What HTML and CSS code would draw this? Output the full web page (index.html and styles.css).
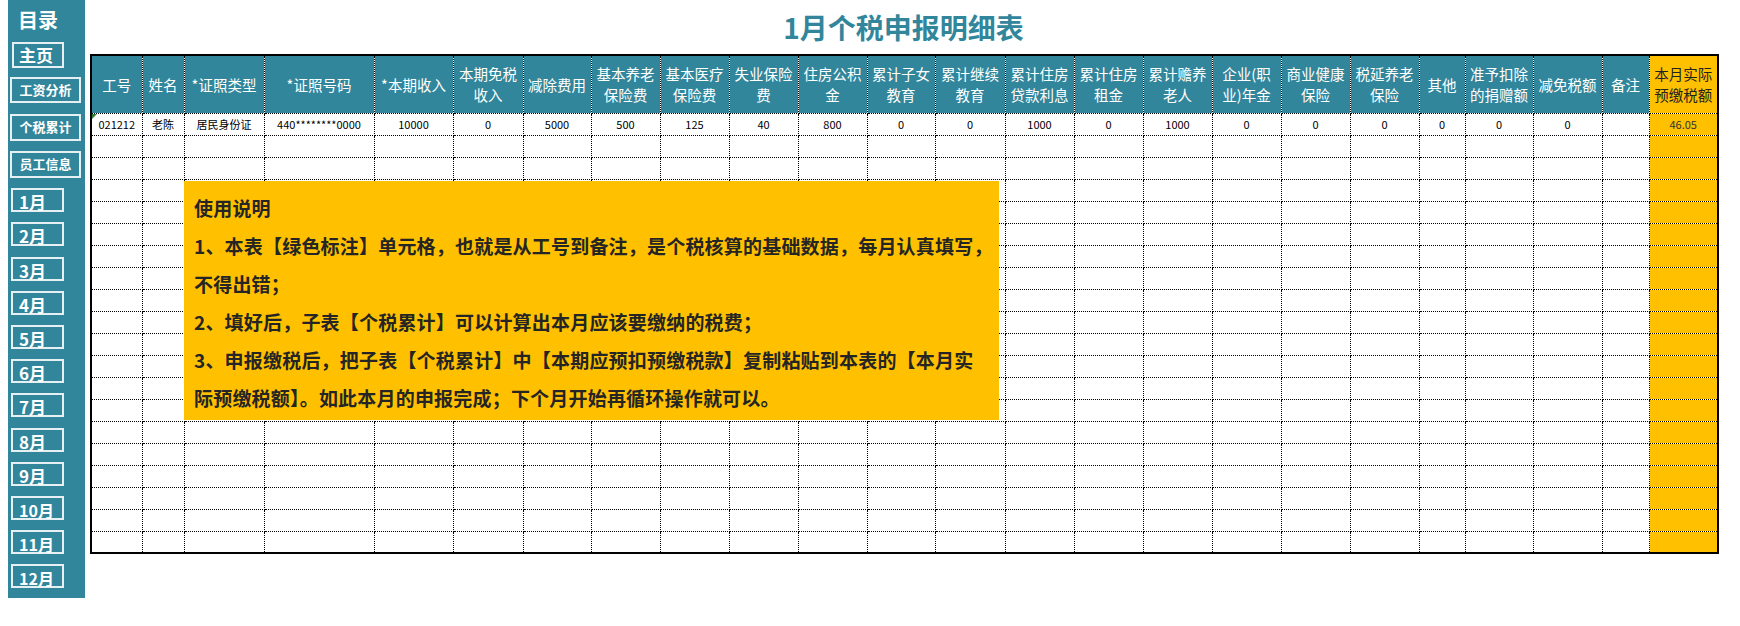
FILE: index.html
```html
<!DOCTYPE html>
<html lang="zh-CN">
<head>
<meta charset="utf-8">
<title>1月个税申报明细表</title>
<link rel="stylesheet" href="styles.css">
</head>
<body>
<div class="page">
  <nav class="sidebar">
    <div class="side-title">目录</div>
    <div class="btn btn-home">主页</div>
    <div class="btn btn-wide btn-first">工资分析</div>
    <div class="btn btn-wide btn-mid">个税累计</div>
    <div class="btn btn-wide btn-mid2">员工信息</div>
    <div class="btn btn-month">1月</div>
    <div class="btn btn-month">2月</div>
    <div class="btn btn-month">3月</div>
    <div class="btn btn-month">4月</div>
    <div class="btn btn-month">5月</div>
    <div class="btn btn-month">6月</div>
    <div class="btn btn-month">7月</div>
    <div class="btn btn-month">8月</div>
    <div class="btn btn-month">9月</div>
    <div class="btn btn-month btn-dd">10月</div>
    <div class="btn btn-month btn-dd">11月</div>
    <div class="btn btn-month btn-dd">12月</div>
  </nav>
  <main class="main">
    <h1 class="title">1月个税申报明细表</h1>
    <table class="sheet">
      <colgroup>
        <col><col><col><col><col><col><col><col><col><col><col><col>
        <col><col><col><col><col><col><col><col><col><col><col><col>
      </colgroup>
      <thead>
        <tr class="head">
          <th>工号</th><th>姓名</th><th>*证照类型</th><th>*证照号码</th><th>*本期收入</th>
          <th>本期免税<br>收入</th><th>减除费用</th><th>基本养老<br>保险费</th><th>基本医疗<br>保险费</th>
          <th>失业保险<br>费</th><th>住房公积<br>金</th><th>累计子女<br>教育</th><th>累计继续<br>教育</th>
          <th>累计住房<br>贷款利息</th><th>累计住房<br>租金</th><th>累计赡养<br>老人</th><th>企业(职<br>业)年金</th>
          <th>商业健康<br>保险</th><th>税延养老<br>保险</th><th>其他</th><th>准予扣除<br>的捐赠额</th>
          <th>减免税额</th><th>备注</th><th class="o">本月实际<br>预缴税额</th>
        </tr>
      </thead>
      <tbody>
        <tr class="r"><td class="flag">021212</td><td>老陈</td><td>居民身份证</td><td>440********0000</td><td>10000</td><td>0</td><td>5000</td><td>500</td><td>125</td><td>40</td><td>800</td><td>0</td><td>0</td><td>1000</td><td>0</td><td>1000</td><td>0</td><td>0</td><td>0</td><td>0</td><td>0</td><td>0</td><td></td><td class="o">46.05</td></tr>
        <tr class="r"><td></td><td></td><td></td><td></td><td></td><td></td><td></td><td></td><td></td><td></td><td></td><td></td><td></td><td></td><td></td><td></td><td></td><td></td><td></td><td></td><td></td><td></td><td></td><td class="o"></td></tr>
        <tr class="r"><td></td><td></td><td></td><td></td><td></td><td></td><td></td><td></td><td></td><td></td><td></td><td></td><td></td><td></td><td></td><td></td><td></td><td></td><td></td><td></td><td></td><td></td><td></td><td class="o"></td></tr>
        <tr class="r"><td></td><td></td><td></td><td></td><td></td><td></td><td></td><td></td><td></td><td></td><td></td><td></td><td></td><td></td><td></td><td></td><td></td><td></td><td></td><td></td><td></td><td></td><td></td><td class="o"></td></tr>
        <tr class="r"><td></td><td></td><td></td><td></td><td></td><td></td><td></td><td></td><td></td><td></td><td></td><td></td><td></td><td></td><td></td><td></td><td></td><td></td><td></td><td></td><td></td><td></td><td></td><td class="o"></td></tr>
        <tr class="r"><td></td><td></td><td></td><td></td><td></td><td></td><td></td><td></td><td></td><td></td><td></td><td></td><td></td><td></td><td></td><td></td><td></td><td></td><td></td><td></td><td></td><td></td><td></td><td class="o"></td></tr>
        <tr class="r"><td></td><td></td><td></td><td></td><td></td><td></td><td></td><td></td><td></td><td></td><td></td><td></td><td></td><td></td><td></td><td></td><td></td><td></td><td></td><td></td><td></td><td></td><td></td><td class="o"></td></tr>
        <tr class="r"><td></td><td></td><td></td><td></td><td></td><td></td><td></td><td></td><td></td><td></td><td></td><td></td><td></td><td></td><td></td><td></td><td></td><td></td><td></td><td></td><td></td><td></td><td></td><td class="o"></td></tr>
        <tr class="r"><td></td><td></td><td></td><td></td><td></td><td></td><td></td><td></td><td></td><td></td><td></td><td></td><td></td><td></td><td></td><td></td><td></td><td></td><td></td><td></td><td></td><td></td><td></td><td class="o"></td></tr>
        <tr class="r"><td></td><td></td><td></td><td></td><td></td><td></td><td></td><td></td><td></td><td></td><td></td><td></td><td></td><td></td><td></td><td></td><td></td><td></td><td></td><td></td><td></td><td></td><td></td><td class="o"></td></tr>
        <tr class="r"><td></td><td></td><td></td><td></td><td></td><td></td><td></td><td></td><td></td><td></td><td></td><td></td><td></td><td></td><td></td><td></td><td></td><td></td><td></td><td></td><td></td><td></td><td></td><td class="o"></td></tr>
        <tr class="r"><td></td><td></td><td></td><td></td><td></td><td></td><td></td><td></td><td></td><td></td><td></td><td></td><td></td><td></td><td></td><td></td><td></td><td></td><td></td><td></td><td></td><td></td><td></td><td class="o"></td></tr>
        <tr class="r"><td></td><td></td><td></td><td></td><td></td><td></td><td></td><td></td><td></td><td></td><td></td><td></td><td></td><td></td><td></td><td></td><td></td><td></td><td></td><td></td><td></td><td></td><td></td><td class="o"></td></tr>
        <tr class="r"><td></td><td></td><td></td><td></td><td></td><td></td><td></td><td></td><td></td><td></td><td></td><td></td><td></td><td></td><td></td><td></td><td></td><td></td><td></td><td></td><td></td><td></td><td></td><td class="o"></td></tr>
        <tr class="r"><td></td><td></td><td></td><td></td><td></td><td></td><td></td><td></td><td></td><td></td><td></td><td></td><td></td><td></td><td></td><td></td><td></td><td></td><td></td><td></td><td></td><td></td><td></td><td class="o"></td></tr>
        <tr class="r"><td></td><td></td><td></td><td></td><td></td><td></td><td></td><td></td><td></td><td></td><td></td><td></td><td></td><td></td><td></td><td></td><td></td><td></td><td></td><td></td><td></td><td></td><td></td><td class="o"></td></tr>
        <tr class="r"><td></td><td></td><td></td><td></td><td></td><td></td><td></td><td></td><td></td><td></td><td></td><td></td><td></td><td></td><td></td><td></td><td></td><td></td><td></td><td></td><td></td><td></td><td></td><td class="o"></td></tr>
        <tr class="r"><td></td><td></td><td></td><td></td><td></td><td></td><td></td><td></td><td></td><td></td><td></td><td></td><td></td><td></td><td></td><td></td><td></td><td></td><td></td><td></td><td></td><td></td><td></td><td class="o"></td></tr>
        <tr class="r"><td></td><td></td><td></td><td></td><td></td><td></td><td></td><td></td><td></td><td></td><td></td><td></td><td></td><td></td><td></td><td></td><td></td><td></td><td></td><td></td><td></td><td></td><td></td><td class="o"></td></tr>
        <tr class="r"><td></td><td></td><td></td><td></td><td></td><td></td><td></td><td></td><td></td><td></td><td></td><td></td><td></td><td></td><td></td><td></td><td></td><td></td><td></td><td></td><td></td><td></td><td></td><td class="o"></td></tr>
      </tbody>
    </table>
    <div class="note">
      <div class="note-line note-head">使用说明</div>
      <div class="note-line">1、本表【绿色标注】单元格，也就是从工号到备注，是个税核算的基础数据，每月认真填写，</div>
      <div class="note-line">不得出错；</div>
      <div class="note-line">2、填好后，子表【个税累计】可以计算出本月应该要缴纳的税费；</div>
      <div class="note-line">3、申报缴税后，把子表【个税累计】中【本期应预扣预缴税款】复制粘贴到本表的【本月实</div>
      <div class="note-line">际预缴税额】。如此本月的申报完成；下个月开始再循环操作就可以。</div>
    </div>
  </main>
</div>
</body>
</html>
```

FILE: styles.css
```css
* { box-sizing: border-box; }

html, body {
  margin: 0;
  padding: 0;
  background: #ffffff;
}

body {
  font-family: "Noto Sans CJK SC", "Noto Sans", sans-serif;
  color: #000;
}

.page {
  display: flex;
  align-items: flex-start;
  padding-left: 8px;
}

/* ---------- sidebar ---------- */
.sidebar {
  width: 77px;
  height: 598px;
  background: #31869b;
  display: flex;
  flex-direction: column;
  align-items: flex-start;
  flex-shrink: 0;
}

.side-title {
  margin-top: 6px;
  padding-left: 10px;
  height: 28px;
  line-height: 28px;
  font-size: 20px;
  font-weight: 700;
  color: #ffffff;
}

.btn {
  border: 2px solid #e6f0f3;
  color: #ffffff;
  font-weight: 700;
  white-space: nowrap;
}

.btn-home {
  margin-top: 8px;
  margin-left: 4px;
  width: 52px;
  height: 26px;
  line-height: 21px;
  font-size: 17px;
  padding-left: 5px;
}

.btn-wide {
  margin-left: 2px;
  width: 71px;
  height: 26px;
  line-height: 21px;
  font-size: 13px;
  text-align: center;
}

.btn-first { margin-top: 9px; }
.btn-mid { margin-top: 11px; height: 27px; line-height: 22px; }
.btn-mid2 { margin-top: 10px; height: 27px; line-height: 22px; }

.btn-month {
  margin-left: 3px;
  margin-top: 10.2px;
  width: 53px;
  height: 24px;
  line-height: 22px;
  padding-top: 1px;
  padding-left: 6px;
  font-size: 17px;
}

.btn-dd { font-size: 16px; }

/* ---------- main ---------- */
.main {
  position: relative;
  margin-left: 5px;
  width: 1627px;
}

.title {
  margin: 0;
  height: 54px;
  line-height: 54px;
  text-align: center;
  font-size: 28px;
  font-weight: 700;
  color: #31869b;
}

.sheet {
  width: 1627px;
  table-layout: fixed;
  border-collapse: collapse;
  border: 2px solid #000;
}

.sheet col:nth-child(1) { width: 51px; }
.sheet col:nth-child(2) { width: 42px; }
.sheet col:nth-child(3) { width: 80px; }
.sheet col:nth-child(4) { width: 110px; }
.sheet col:nth-child(5) { width: 79px; }
.sheet col:nth-child(6) { width: 70px; }
.sheet col:nth-child(7) { width: 68px; }
.sheet col:nth-child(8) { width: 69px; }
.sheet col:nth-child(9) { width: 69px; }
.sheet col:nth-child(10) { width: 69px; }
.sheet col:nth-child(11) { width: 69px; }
.sheet col:nth-child(12) { width: 68px; }
.sheet col:nth-child(13) { width: 70px; }
.sheet col:nth-child(14) { width: 69px; }
.sheet col:nth-child(15) { width: 69px; }
.sheet col:nth-child(16) { width: 69px; }
.sheet col:nth-child(17) { width: 69px; }
.sheet col:nth-child(18) { width: 69px; }
.sheet col:nth-child(19) { width: 69px; }
.sheet col:nth-child(20) { width: 46px; }
.sheet col:nth-child(21) { width: 68px; }
.sheet col:nth-child(22) { width: 69px; }
.sheet col:nth-child(23) { width: 47px; }
.sheet col:nth-child(24) { width: 69px; }

.sheet th,
.sheet td {
  border: 1px dotted #000;
  padding: 0;
  text-align: center;
  vertical-align: middle;
  overflow: hidden;
  white-space: nowrap;
}

.head th {
  height: 58px;
  background: #31869b;
  color: #ffffff;
  font-weight: 400;
  font-size: 14.5px;
  line-height: 21px;
}

.head th.o {
  background: #ffc000;
  color: #222;
}

.r td {
  height: 22px;
  font-size: 11px;
  line-height: 18px;
  color: #000;
}

.r td.o {
  background: #ffc000;
  color: #333;
}

.flag {
  position: relative;
}

.flag::before {
  content: "";
  position: absolute;
  left: 0;
  top: 0;
  width: 0;
  height: 0;
  border-top: 5px solid #2e7d32;
  border-right: 5px solid transparent;
}

/* ---------- instruction box ---------- */
.note {
  position: absolute;
  left: 94px;
  top: 181px;
  width: 815px;
  height: 239px;
  background: #ffc000;
  padding: 8px 0 3px 10px;
  color: #252525;
  font-size: 19px;
  font-weight: 700;
  letter-spacing: 0.2px;
}

.note-line {
  height: 38px;
  line-height: 38px;
  white-space: nowrap;
}
```
